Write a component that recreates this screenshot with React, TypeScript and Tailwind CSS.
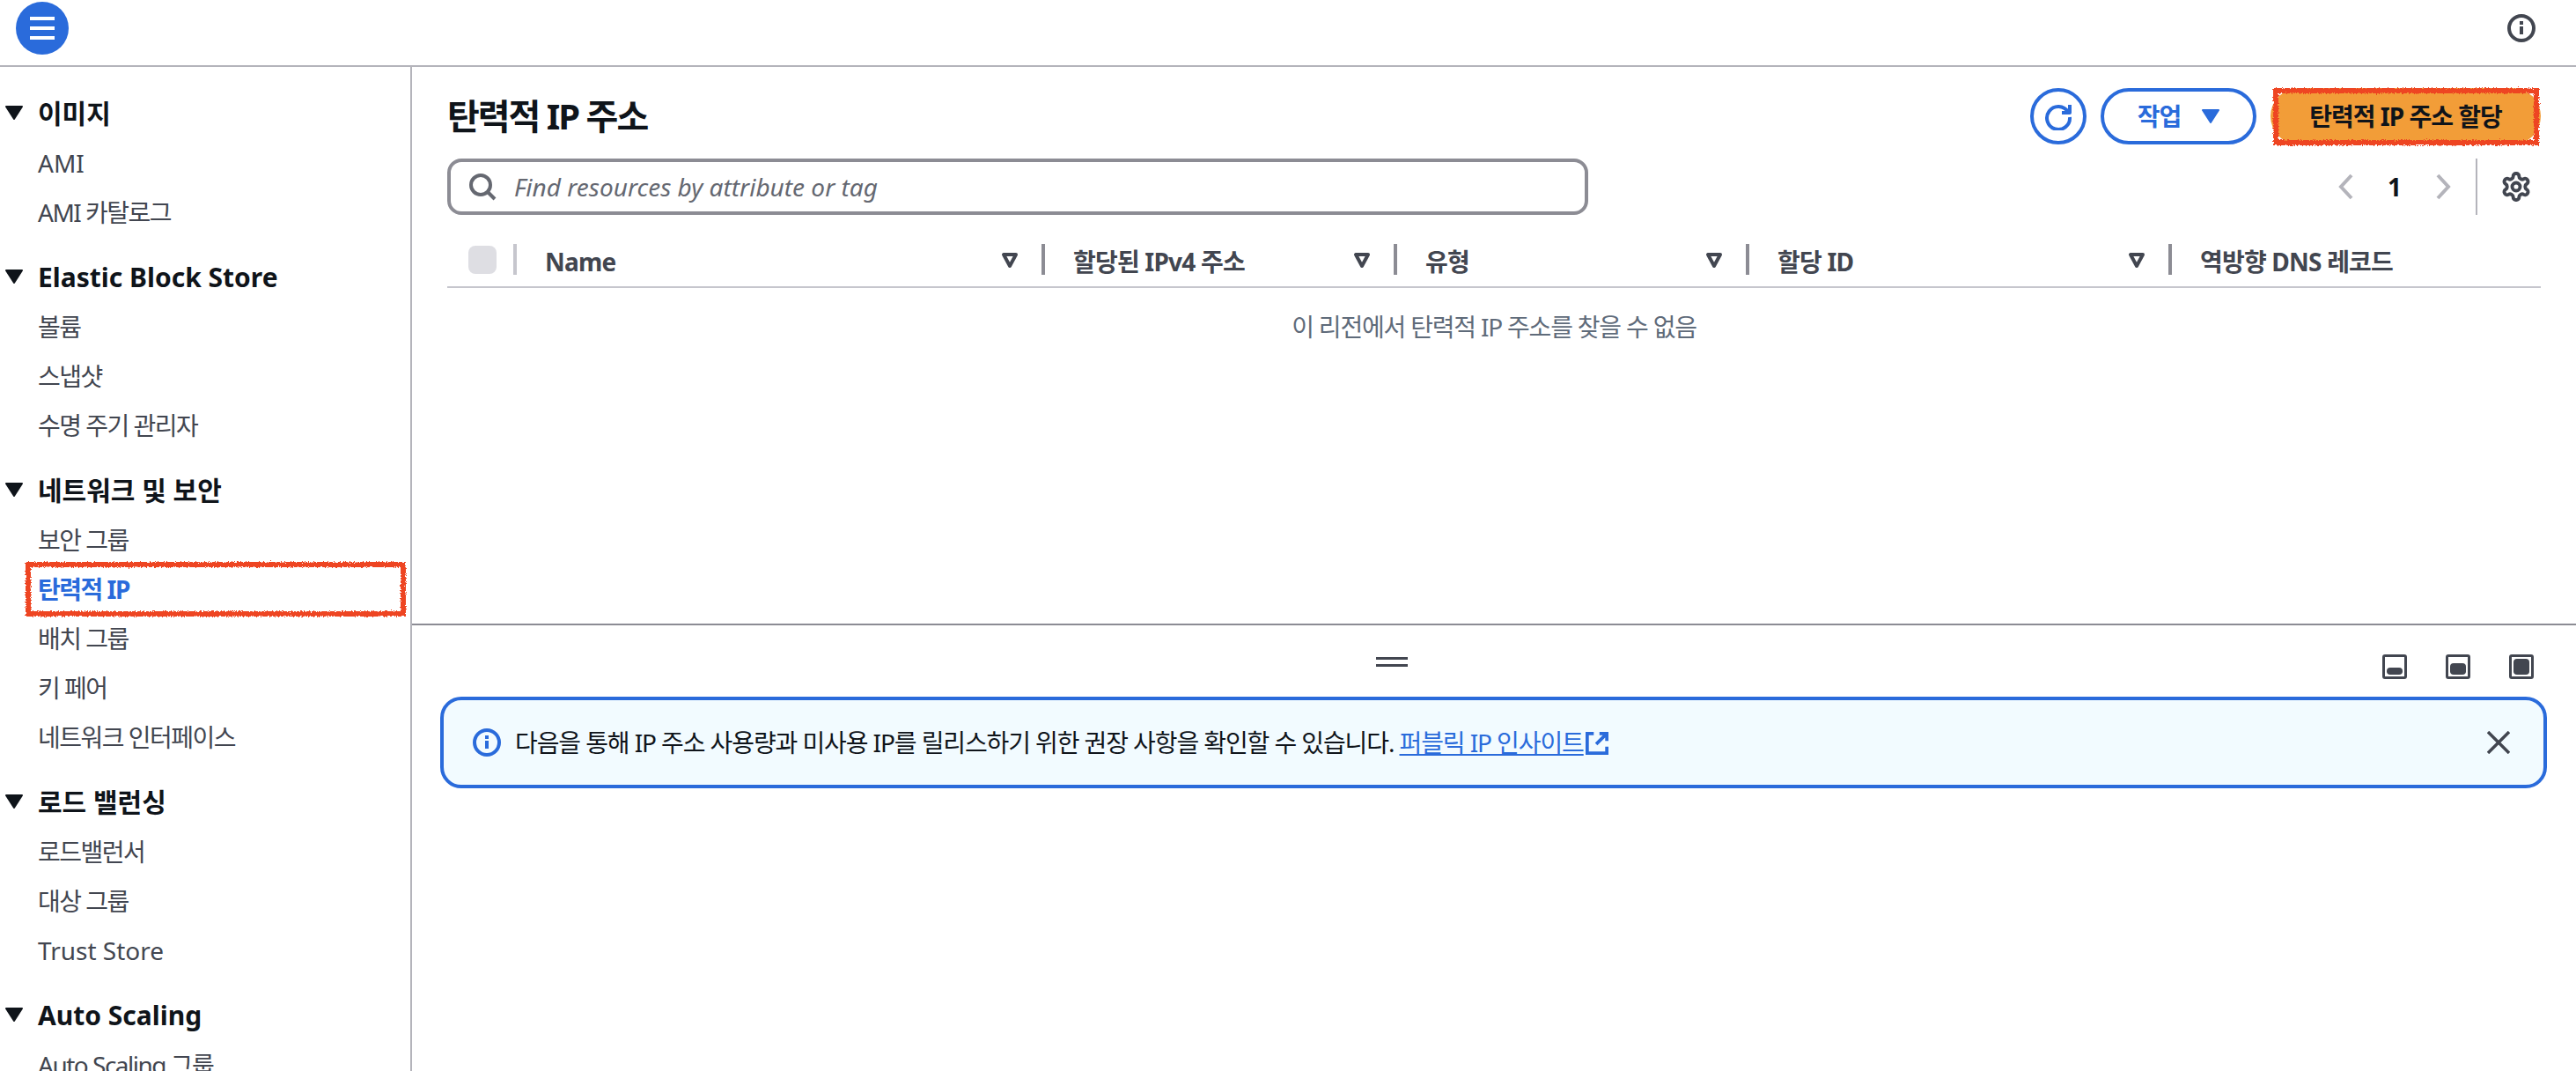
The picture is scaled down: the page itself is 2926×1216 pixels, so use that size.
import React from 'react';

const FONT = '[font-family:"Noto_Sans","Noto_Sans_CJK_KR",sans-serif]';

const NAV = [
  { title: '이미지', items: ['AMI', 'AMI 카탈로그'] },
  { title: 'Elastic Block Store', items: ['볼륨', '스냅샷', '수명 주기 관리자'] },
  { title: '네트워크 및 보안', items: ['보안 그룹', '탄력적 IP', '배치 그룹', '키 페어', '네트워크 인터페이스'] },
  { title: '로드 밸런싱', items: ['로드밸런서', '대상 그룹', 'Trust Store'] },
  { title: 'Auto Scaling', items: ['Auto Scaling 그룹'] },
];

const COLUMNS = [
  { label: 'Name', width: 'w-[600px]' },
  { label: '할당된 IPv4 주소', width: 'w-[400px]' },
  { label: '유형', width: 'w-[400px]' },
  { label: '할당 ID', width: 'w-[480px]' },
];

// hand drawn red marker box used around the highlighted controls
function Marker({ className }: { className: string }) {
  return <div className={`absolute border-[6px] border-[#ee4422] pointer-events-none [filter:url(#rough)] ${className}`} />;
}

function InfoIcon({ className }: { className: string }) {
  return (
    <svg viewBox="0 0 32 32" className={className} fill="none" stroke="currentColor">
      <circle cx="16" cy="16" r="14" strokeWidth="4" />
      <path d="M16 14v9" strokeWidth="4" />
      <path d="M16 8v4" strokeWidth="4" />
    </svg>
  );
}

function FilterIcon() {
  return (
    <svg viewBox="0 0 20 20" className="w-5 h-5 text-[#424650]" fill="none" stroke="currentColor" strokeWidth="4" strokeLinejoin="round">
      <path d="M3 4h14l-7 13z" />
    </svg>
  );
}

function Sidebar() {
  return (
    <aside className="w-[468px] shrink-0 border-r-2 border-[#b4b4bb] h-full overflow-hidden pt-[23px] flex flex-col gap-[16px]">
      {NAV.map((section) => (
        <div key={section.title}>
          <div className="h-[58px] flex items-center text-[30px] font-bold text-[#0f141a]">
            <svg viewBox="0 0 20 16" className="w-5 h-4 ml-[6px] mr-[17px]" fill="currentColor" stroke="currentColor" strokeWidth="2" strokeLinejoin="round">
              <path d="M1 1h18L10 15z" />
            </svg>
            {section.title}
          </div>
          {section.items.map((item) => (
            <div key={item} className={`relative h-[56px] flex items-center pl-[43px] text-[28px] leading-none ${/[가-힣]/.test(item) ? 'tracking-[-1.5px]' : 'tracking-normal'}`}>
              {item === '탄력적 IP' ? (
                <>
                  <span className="font-bold text-[#2a6bdb]">{item}</span>
                  <Marker className="left-[29px] right-[5px] top-[-3px] bottom-[-3px]" />
                </>
              ) : (
                <span className="text-[#424650]">{item}</span>
              )}
            </div>
          ))}
        </div>
      ))}
    </aside>
  );
}

function UpperPane() {
  return (
    <div className="h-[634px] border-b-2 border-[#8c8c94] pl-[40px] pr-[40px] pt-6 shrink-0">
      <div className="flex items-center justify-between h-[64px]">
        <h1 className="text-[40px] font-bold text-[#0f141a] leading-none tracking-[-2px]">탄력적 IP 주소</h1>
        <div className="flex items-center">
          <button className="w-[64px] h-[64px] rounded-full border-4 border-[#2a6bdb] text-[#2a6bdb] flex items-center justify-center">
            <svg viewBox="0 0 32 32" className="w-8 h-8" fill="none" stroke="currentColor" strokeWidth="4">
              <path d="M27 11a13 13 0 1 0 2 6" />
              <path d="M29 3v9h-9" strokeLinejoin="round" />
            </svg>
          </button>
          <button className="ml-4 w-[177px] h-[64px] rounded-full border-4 border-[#2a6bdb] text-[#2a6bdb] text-[28px] font-bold tracking-[-1px] flex items-center justify-center gap-6">
            작업
            <svg viewBox="0 0 20 16" className="w-5 h-4" fill="currentColor" stroke="currentColor" strokeWidth="2" strokeLinejoin="round">
              <path d="M1 1h18L10 15z" />
            </svg>
          </button>
          <button className="relative ml-4 w-[307px] h-[64px] rounded-full bg-[#f29d38] text-[#0f141a] text-[28px] font-bold tracking-[-1px]">
            탄력적 IP 주소 할당
            <Marker className="left-[3px] right-[2px] top-0 bottom-[-1px]" />
          </button>
        </div>
      </div>

      <div className="flex items-center justify-between mt-4 h-[64px]">
        <div className="w-[1296px] h-[64px] rounded-2xl border-4 border-[#8c8c94] flex items-center pl-5 text-[#656871]">
          <svg viewBox="0 0 32 32" className="w-8 h-8 text-[#656871] mr-[20px]" fill="none" stroke="currentColor" strokeWidth="4">
            <circle cx="14" cy="14" r="11" />
            <path d="M22 22l8 8" />
          </svg>
          <span className="italic text-[28px]">Find resources by attribute or tag</span>
        </div>
        <div className="flex items-center h-[64px]">
          <svg viewBox="0 0 20 32" className="w-5 h-8 text-[#b4b4bb]" fill="none" stroke="currentColor" strokeWidth="4">
            <path d="M16 3L4 16l12 13" />
          </svg>
          <span className="w-[90px] text-center text-[28px] font-bold text-[#0f141a]">1</span>
          <svg viewBox="0 0 20 32" className="w-5 h-8 text-[#b4b4bb]" fill="none" stroke="currentColor" strokeWidth="4">
            <path d="M4 3l12 13L4 29" />
          </svg>
          <div className="w-[2px] h-[64px] bg-[#b4b4bb] ml-[27px] mr-[26px]" />
          <svg viewBox="0 0 24 24" className="w-9 h-9 text-[#424650] mr-[10px]" fill="none" stroke="currentColor" strokeWidth="2.6" strokeLinejoin="round">
            <path d="M12.22 2h-.44a2 2 0 0 0-2 2v.18a2 2 0 0 1-1 1.73l-.43.25a2 2 0 0 1-2 0l-.15-.08a2 2 0 0 0-2.73.73l-.22.38a2 2 0 0 0 .73 2.73l.15.1a2 2 0 0 1 1 1.72v.51a2 2 0 0 1-1 1.74l-.15.09a2 2 0 0 0-.73 2.73l.22.38a2 2 0 0 0 2.73.73l.15-.08a2 2 0 0 1 2 0l.43.25a2 2 0 0 1 1 1.73V20a2 2 0 0 0 2 2h.44a2 2 0 0 0 2-2v-.18a2 2 0 0 1 1-1.73l.43-.25a2 2 0 0 1 2 0l.15.08a2 2 0 0 0 2.73-.73l.22-.39a2 2 0 0 0-.73-2.73l-.15-.08a2 2 0 0 1-1-1.74v-.5a2 2 0 0 1 1-1.74l.15-.09a2 2 0 0 0 .73-2.73l-.22-.38a2 2 0 0 0-2.73-.73l-.15.08a2 2 0 0 1-2 0l-.43-.25a2 2 0 0 1-1-1.73V4a2 2 0 0 0-2-2z" />
            <circle cx="12" cy="12" r="3" />
          </svg>
        </div>
      </div>

      <div className="flex items-center h-[51px] mt-[32px] border-b-2 border-[#c6c6cd] text-[28px] font-bold text-[#424650] tracking-[-0.8px] pb-3">
        <div className="w-[75px] flex justify-end pr-[19px] shrink-0">
          <div className="w-8 h-8 rounded-lg bg-[#dedee3]" />
        </div>
        {COLUMNS.map((col, i) => (
          <div key={col.label} className={`${col.width} h-[35px] flex items-center justify-between border-l-4 ${i === 0 ? 'border-[#c6c6cd]' : 'border-[#8c8c94]'} pl-[32px] pr-[26px]`}>
            <span className="translate-y-[2px]">{col.label}</span>
            <FilterIcon />
          </div>
        ))}
        <div className="h-[35px] flex items-center border-l-4 border-[#8c8c94] pl-[32px]">
          <span className="translate-y-[2px]">역방향 DNS 레코드</span>
        </div>
      </div>

      <p className="text-center text-[28px] text-[#5f6b7a] tracking-[-1.2px] mt-[23px]">이 리전에서 탄력적 IP 주소를 찾을 수 없음</p>
    </div>
  );
}

function LowerPane() {
  return (
    <div className="relative flex-1 pl-[32px] pr-[33px]">
      <div className="h-[30px] mt-[36px] relative">
        <div className="w-9 h-[11px] border-y-[3px] border-[#424650] ml-[1063px]" />
        <div className="absolute right-[15px] top-[-3px] flex gap-[44px]">
          <div className="w-7 h-7 rounded-[3px] border-[3px] border-[#424650] p-[2px] flex items-end"><div className="w-full h-2 rounded-sm bg-[#424650]" /></div>
          <div className="w-7 h-7 rounded-[3px] border-[3px] border-[#424650] p-[2px] flex items-end"><div className="w-full h-[13px] rounded-sm bg-[#424650]" /></div>
          <div className="w-7 h-7 rounded-[3px] border-[3px] border-[#424650] p-[2px] flex"><div className="w-full rounded-sm bg-[#424650]" /></div>
        </div>
      </div>
      <div className="mt-[15px] h-[104px] rounded-3xl border-4 border-[#2a6bdb] bg-[#f2fbff] flex items-center pl-[33px] pr-[38px]">
        <InfoIcon className="w-8 h-8 text-[#2a6bdb] shrink-0" />
        <p className="ml-[16px] text-[28px] text-[#0f141a] tracking-[-1.1px] flex-1">
          다음을 통해 IP 주소 사용량과 미사용 IP를 릴리스하기 위한 권장 사항을 확인할 수 있습니다.{' '}
          <a className="text-[#2a6bdb] underline">퍼블릭 IP 인사이트</a>
          <svg viewBox="0 0 28 28" className="inline-block w-[26px] h-[26px] ml-[2px] text-[#2a6bdb] align-[-3px]" fill="none" stroke="currentColor" strokeWidth="4">
            <path d="M10 2H2v24h24v-8" />
            <path d="M17 2h9v9M26 2L13 15" />
          </svg>
        </p>
        <svg viewBox="0 0 26 26" className="w-[26px] h-[26px] text-[#424650] shrink-0" fill="none" stroke="currentColor" strokeWidth="3.5">
          <path d="M1 1l24 24M25 1L1 25" />
        </svg>
      </div>
    </div>
  );
}

export default function App() {
  return (
    <div className={`relative w-[2926px] h-[1216px] overflow-hidden bg-white flex flex-col ${FONT}`}>
      <svg className="absolute w-0 h-0">
        <filter id="rough">
          <feTurbulence type="fractalNoise" baseFrequency="0.7" numOctaves="2" result="n" />
          <feDisplacementMap in="SourceGraphic" in2="n" scale="5" />
        </filter>
      </svg>
      <header className="h-[76px] shrink-0 border-b-2 border-[#b4b4bb] flex items-center justify-between pl-[18px] pr-[46px] pb-[10px]">
        <button className="w-[60px] h-[60px] rounded-full bg-[#2a6bdb] flex flex-col items-center justify-center gap-[7px]">
          <span className="w-7 h-1 bg-white" />
          <span className="w-7 h-1 bg-white" />
          <span className="w-7 h-1 bg-white" />
        </button>
        <InfoIcon className="w-8 h-8 text-[#424650]" />
      </header>
      <div className="flex flex-1 min-h-0">
        <Sidebar />
        <main className="flex-1 flex flex-col min-w-0">
          <UpperPane />
          <LowerPane />
        </main>
      </div>
    </div>
  );
}
